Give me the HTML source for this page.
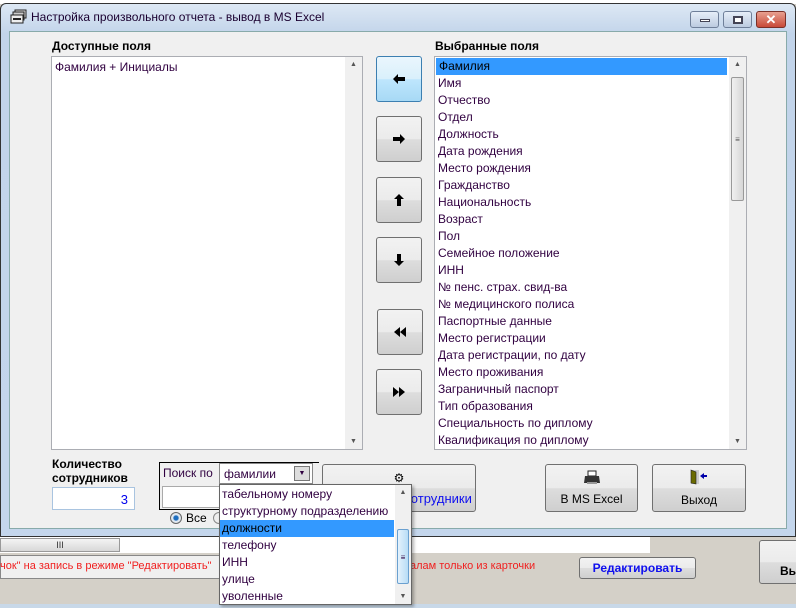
<!DOCTYPE html>
<html><head><meta charset="utf-8"><style>
*{box-sizing:border-box;margin:0;padding:0}
body{width:796px;height:608px;overflow:hidden;background:#d4d0c8;font-family:"Liberation Sans",sans-serif;font-size:12px;position:relative;color:#300040}
.a{position:absolute}
.btn{position:absolute;border:1px solid #707070;border-radius:3px;background:linear-gradient(#f2f2f2 0%,#ebebeb 50%,#dddddd 51%,#cfcfcf 100%);display:flex;align-items:center;justify-content:center;flex-direction:column}
.list{position:absolute;background:#fff;border:1px solid #abadb3}
.it{height:17px;line-height:17px;padding-left:3px;white-space:nowrap;font-size:12px}
.sb{position:absolute;right:0;top:0;bottom:0;width:17px;background:#f0f0f0}
.up{position:absolute;left:0;top:4px;width:17px;text-align:center;font-size:7px;color:#555}
.dn{position:absolute;left:0;bottom:4px;width:17px;text-align:center;font-size:7px;color:#555}
.lbl{font-weight:bold;font-size:12px;color:#000}
</style></head><body>
<div class="a" style="left:0;top:0;width:796px;height:4px;background:#fff"></div>
<div class="a" style="left:0;top:537px;width:650px;height:16px;background:#fff"></div>
<div class="a" style="left:0;top:538px;width:120px;height:14px;background:linear-gradient(#f4f4f4,#d8d8d8);border:1px solid #999;font-size:9px;text-align:center;line-height:12px;color:#333">III</div>
<div class="a" style="left:0;top:555px;width:250px;height:24px;background:#f0f0f0;border:1px solid #888"></div>
<div class="a" style="left:0;top:560px;color:#f02020;font-size:11px;white-space:nowrap">чок" на запись в режиме "Редактировать"</div>
<div class="a" style="left:410px;top:560px;color:#f02020;font-size:11px;white-space:nowrap">алам только из карточки</div>
<div class="btn" style="left:579px;top:557px;width:117px;height:22px;color:#1010ee;font-weight:bold">Редактировать</div>
<div class="btn" style="left:759px;top:540px;width:40px;height:44px;align-items:flex-start;padding-left:20px;font-weight:bold;color:#000"><span style="margin-top:18px">Вы</span></div>
<div class="a" style="left:0;top:604px;width:796px;height:4px;background:#c8d8e8"></div>

<div class="a" style="left:0;top:3px;width:796px;height:534px;border:1px solid #333;border-radius:6px 6px 0 0;background:linear-gradient(#dde8f4,#c2d4ea 30px,#c4d6ec)"></div>
<svg class="a" style="left:10px;top:9px" width="18" height="16" viewBox="0 0 18 16"><rect x="5" y="1" width="11" height="8" fill="#ddd" stroke="#222"/><rect x="3" y="3" width="11" height="8" fill="#ccc" stroke="#222"/><rect x="1" y="6" width="12" height="8" fill="#eee" stroke="#222"/><rect x="3" y="9" width="8" height="2" fill="#222"/></svg>
<div class="a" style="left:31px;top:10px;font-size:12px;color:#1a0030">Настройка произвольного отчета - вывод в MS Excel</div>
<div class="a" style="left:690px;top:11px;width:29px;height:17px;border:1px solid #6f7f99;border-radius:3px;background:linear-gradient(#e6eef8,#bccbe0)"><div style="margin:7px auto;width:10px;height:3px;background:#fff;border:1px solid #445"></div></div>
<div class="a" style="left:723px;top:11px;width:29px;height:17px;border:1px solid #6f7f99;border-radius:3px;background:linear-gradient(#e6eef8,#bccbe0)"><div style="margin:4px auto;width:10px;height:8px;border:2px solid #445;background:#fff"></div></div>
<div class="a" style="left:756px;top:11px;width:30px;height:17px;border:1px solid #7a3028;border-radius:3px;background:linear-gradient(#e8a090,#c84a38);color:#fff;font-weight:bold;text-align:center;line-height:15px;font-size:13px">✕</div>
<div class="a" style="left:9px;top:31px;width:778px;height:498px;background:#f0f0f0;border:1px solid #8aa"></div>

<div class="a lbl" style="left:52px;top:39px">Доступные поля</div>
<div class="a lbl" style="left:435px;top:39px">Выбранные поля</div>

<div class="list" style="left:51px;top:56px;width:312px;height:394px;padding-top:2px">
<div class="it">Фамилия + Инициалы</div>
<div class="sb"><div class="up">▲</div><div class="dn">▼</div></div>
</div>

<div class="list" style="left:434px;top:56px;width:313px;height:394px;padding-top:1px">
<div class="it" style="background:#3399ff;color:#000;margin-right:19px;margin-left:1px">Фамилия</div>
<div class="it">Имя</div><div class="it">Отчество</div><div class="it">Отдел</div><div class="it">Должность</div><div class="it">Дата рождения</div><div class="it">Место рождения</div><div class="it">Гражданство</div><div class="it">Национальность</div><div class="it">Возраст</div><div class="it">Пол</div><div class="it">Семейное положение</div><div class="it">ИНН</div><div class="it">№ пенс. страх. свид-ва</div><div class="it">№ медицинского полиса</div><div class="it">Паспортные данные</div><div class="it">Место регистрации</div><div class="it">Дата регистрации, по дату</div><div class="it">Место проживания</div><div class="it">Заграничный паспорт</div><div class="it">Тип образования</div><div class="it">Специальность по диплому</div><div class="it">Квалификация по диплому</div>
<div class="sb"><div class="up">▲</div><div style="position:absolute;left:2px;top:20px;width:13px;height:124px;border:1px solid #999;border-radius:2px;background:linear-gradient(90deg,#f0f0f0,#d6d6d6);font-size:8px;text-align:center;line-height:124px;color:#555">≡</div><div class="dn">▼</div></div>
</div>

<div class="btn" style="left:376px;top:56px;width:46px;height:46px;border-color:#3c7fb1;background:linear-gradient(#eaf6fd,#d9f0fc 50%,#bee6fd 51%,#a7d9f5)"><svg width="12" height="10" viewBox="0 0 12 10"><path d="M0 5L5 0V3H12V7H5V10Z"/></svg></div>
<div class="btn" style="left:376px;top:116px;width:46px;height:46px"><svg width="12" height="10" viewBox="0 0 12 10"><path d="M12 5L7 0V3H0V7H7V10Z"/></svg></div>
<div class="btn" style="left:376px;top:177px;width:46px;height:46px"><svg width="10" height="12" viewBox="0 0 10 12"><path d="M5 0L0 5H3V12H7V5H10Z"/></svg></div>
<div class="btn" style="left:376px;top:237px;width:46px;height:46px"><svg width="10" height="12" viewBox="0 0 10 12"><path d="M5 12L0 7H3V0H7V7H10Z"/></svg></div>
<div class="btn" style="left:377px;top:309px;width:46px;height:46px"><svg width="12" height="10" viewBox="0 0 12 10"><path d="M0 5L6 0V10ZM6 5L12 0V10Z"/></svg></div>
<div class="btn" style="left:376px;top:369px;width:46px;height:46px"><svg width="12" height="10" viewBox="0 0 12 10"><path d="M6 5L0 0V10ZM12 5L6 0V10Z"/></svg></div>

<div class="a lbl" style="left:52px;top:457px;line-height:14px">Количество<br>сотрудников</div>
<div class="a" style="left:52px;top:487px;width:83px;height:23px;background:#fff;border:1px solid #a9c4e0;color:#0000ee;text-align:right;padding:4px 6px;font-size:13px">3</div>

<div class="a" style="left:159px;top:462px;width:160px;height:48px;border:1px solid #000;border-right:none"></div>
<div class="a" style="left:163px;top:466px">Поиск по</div>
<div class="a" style="left:219px;top:463px;width:94px;height:21px;background:#fff;border:1px solid #888;padding:3px 4px;font-size:12px">фамилии<div style="position:absolute;right:2px;top:2px;width:16px;height:15px;border:1px solid #777;background:#ddd;font-size:7px;text-align:center;line-height:14px">▼</div></div>
<div class="a" style="left:162px;top:486px;width:60px;height:22px;background:#fff;border:1px solid #aaa"></div>
<div class="a" style="left:170px;top:512px;width:12px;height:12px;border-radius:50%;border:1px solid #666;background:radial-gradient(#1c6dbf 30%,#e0e8f0 45%)"></div>
<div class="a" style="left:186px;top:511px;color:#000">Все</div>
<div class="a" style="left:213px;top:512px;width:12px;height:12px;border-radius:50%;border:1px solid #888;background:#eee"></div>

<div class="btn" style="left:322px;top:464px;width:154px;height:48px;color:#1010ee"><span style="font-size:12px;color:#000">⚙</span><span style="margin-left:78px;margin-top:6px;font-size:13px">сотрудники</span></div>
<div class="btn" style="left:545px;top:464px;width:93px;height:48px;color:#000"><svg width="18" height="16" viewBox="0 0 18 16"><rect x="5" y="1" width="8" height="5" fill="#fff" stroke="#222"/><path d="M2 6H16L17 13H1Z" fill="#333"/><rect x="4" y="12" width="10" height="2" fill="#999"/></svg><span style="margin-top:6px">В MS Excel</span></div>
<div class="btn" style="left:652px;top:464px;width:94px;height:48px;color:#000"><svg width="18" height="16" viewBox="0 0 18 16"><rect x="1" y="1" width="8" height="14" fill="#ccc"/><path d="M1 1L6 3V15L1 14Z" fill="#6a6a00" stroke="#222" stroke-width=".6"/><path d="M10 7L14 4V10Z M13 6H17V8H13Z" fill="#0000aa"/></svg><span style="margin-top:8px">Выход</span></div>

<div class="a" style="left:219px;top:484px;width:193px;height:121px;background:#fff;border:1px solid #666;box-shadow:2px 2px 3px rgba(0,0,0,.3);padding-top:1px">
<div class="it" style="padding-left:2px">табельному номеру</div>
<div class="it" style="padding-left:2px">структурному подразделению</div>
<div class="it" style="padding-left:2px;background:#3399ff;margin-right:17px;color:#000">должности</div>
<div class="it" style="padding-left:2px">телефону</div>
<div class="it" style="padding-left:2px">ИНН</div>
<div class="it" style="padding-left:2px">улице</div>
<div class="it" style="padding-left:2px">уволенные</div>
<div style="position:absolute;right:0;top:0;bottom:0;width:16px;background:#f0f0f0"><div class="up" style="width:16px">▲</div><div style="position:absolute;left:2px;top:44px;width:12px;height:55px;border:1px solid #6aa0d0;border-radius:2px;background:linear-gradient(90deg,#e4f2fc,#b8dcf6);font-size:8px;text-align:center;line-height:55px">≡</div><div class="dn" style="width:16px">▼</div></div>
</div>
</body></html>
